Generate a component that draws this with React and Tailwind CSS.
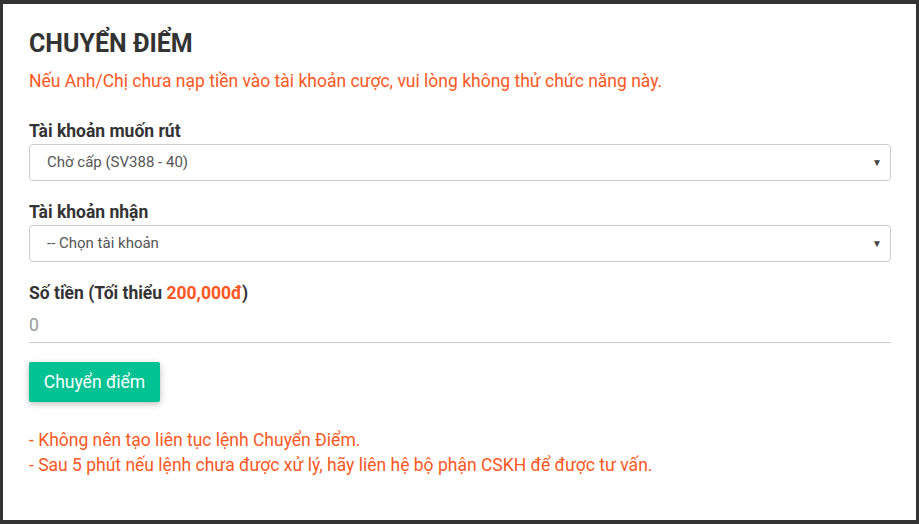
export default function App() {
  const font = { fontFamily: "Roboto, 'Noto Sans', sans-serif" };
  return (
    <div className="w-[919px] h-[524px] bg-[#333333] px-[3px] pt-[4px] pb-[4px]" style={font}>
      <div className="h-full bg-white pl-[26px] pr-[25px] pt-[24px]">
        <h2 className="text-[25px] leading-[32px] font-bold text-[#333333]">CHUYỂN ĐIỂM</h2>
        <p className="mt-[9px] text-[17.5px] leading-[24px] text-[#ff5722]">
          Nếu Anh/Chị chưa nạp tiền vào tài khoản cược, vui lòng không thử chức năng này.
        </p>
        <div className="mt-[26px]">
          <div className="text-[17.5px] leading-[24px] font-bold text-[#333333]">Tài khoản muốn rút</div>
          <div className="mt-[1px] h-[37px] border border-[#cccccc] rounded-[4px] flex items-center justify-between pl-[17px] pr-[8px]">
            <span className="text-[15px] text-[#555555]">Chờ cấp (SV388 - 40)</span>
            <span className="text-[10px] text-[#444444]">▼</span>
          </div>
        </div>
        <div className="mt-[19px]">
          <div className="text-[17.5px] leading-[24px] font-bold text-[#333333]">Tài khoản nhận</div>
          <div className="mt-[1px] h-[37px] border border-[#cccccc] rounded-[4px] flex items-center justify-between pl-[17px] pr-[8px]">
            <span className="text-[15px] text-[#555555]">-- Chọn tài khoản</span>
            <span className="text-[10px] text-[#444444]">▼</span>
          </div>
        </div>
        <div className="mt-[19px]">
          <div className="text-[17.5px] leading-[24px] font-bold text-[#333333]">
            Số tiền (Tối thiểu <span className="text-[#ff5722]">200,000đ</span>)
          </div>
          <div className="h-[38px] pt-[8px] border-b border-[#cccccc] text-[17.5px] leading-[24px] text-[#999999]">0</div>
        </div>
        <button className="mt-[19px] h-[40px] w-[131px] bg-[#00c292] text-white text-[17.5px] rounded-[2px] shadow-[0_2px_5px_rgba(0,0,0,0.16),0_2px_10px_rgba(0,0,0,0.12)]">
          Chuyển điểm
        </button>
        <div className="mt-[26px] text-[17.5px] leading-[25px] text-[#ff5722]">
          <div>- Không nên tạo liên tục lệnh Chuyển Điểm.</div>
          <div>- Sau 5 phút nếu lệnh chưa được xử lý, hãy liên hệ bộ phận CSKH để được tư vấn.</div>
        </div>
      </div>
    </div>
  );
}
